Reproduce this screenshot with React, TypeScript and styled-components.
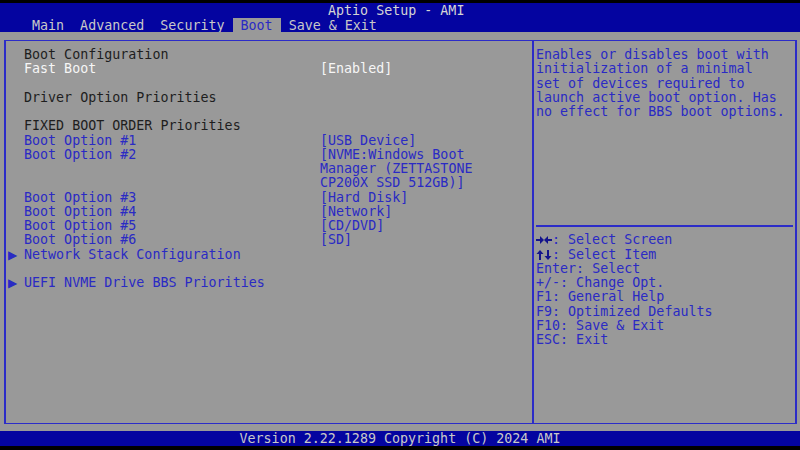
import styled, { createGlobalStyle } from "styled-components";

const ROW = 14.25;

const GlobalStyle = createGlobalStyle`
  html, body {
    margin: 0;
    padding: 0;
    background: #000000;
  }
  * {
    box-sizing: border-box;
  }
`;

const Screen = styled.div`
  width: 800px;
  height: 450px;
  background: #000000;
  display: flex;
  flex-direction: column;
  padding-top: 3px;
  font-family: "DejaVu Sans Mono", "Liberation Mono", monospace;
  font-size: 13.33px;
  overflow: hidden;
`;

const Header = styled.header`
  background: #0404a0;
  height: 29px;
  display: flex;
  flex-direction: column;
`;

const Title = styled.div`
  height: 15px;
  line-height: 16px;
  padding-left: 328px;
  color: #d4d4d4;
  white-space: pre;
`;

const TabBar = styled.nav`
  height: 14px;
  display: flex;
  padding-left: 24px;
`;

const Tab = styled.div<{ $active?: boolean }>`
  height: 14px;
  padding: 1px 8px 0;
  line-height: 14px;
  white-space: pre;
  color: ${(p) => (p.$active ? "#2a2ac4" : "#c8c8c8")};
  background: ${(p) => (p.$active ? "#999999" : "transparent")};
`;

const Body = styled.main`
  background: #999999;
  height: 399px;
  padding: 8px 3px 7px 4px;
`;

const Frame = styled.div`
  height: 100%;
  display: grid;
  grid-template-columns: 528px 1fr;
  border-top: 1px solid #2c2cc8;
  border-bottom: 1px solid #2c2cc8;
  border-left: 2px solid #2c2cc8;
  border-right: 2px solid #2c2cc8;
`;

const LeftPane = styled.section`
  border-right: 2px solid #2c2cc8;
  padding: 7px 0 0 2px;
`;

const RightPane = styled.aside`
  padding: 7px 0 0 2px;
  display: flex;
  flex-direction: column;
`;

const Row = styled.div`
  display: grid;
  grid-template-columns: 16px 296px 20ch;
  line-height: ${ROW}px;
  min-height: ${ROW}px;
`;

type Tone = "dark" | "blue" | "white";

const toneColor: Record<Tone, string> = {
  dark: "#1e1e1e",
  blue: "#2a2ac4",
  white: "#f6f6f6",
};

const Arrow = styled.span`
  color: #2a2ac4;
  font-family: "DejaVu Sans", sans-serif;
  font-size: 12px;
`;

const Label = styled.span<{ $tone: Tone }>`
  color: ${(p) => toneColor[p.$tone]};
  white-space: pre;
`;

const Value = styled.span<{ $tone: Tone }>`
  color: ${(p) => toneColor[p.$tone]};
  white-space: normal;
`;

const HelpText = styled.div`
  height: ${ROW * 12}px;
  line-height: ${ROW}px;
  color: #2a2ac4;
`;

const HelpLine = styled.div`
  white-space: pre;
`;

const Divider = styled.div`
  height: ${ROW}px;
  display: flex;
  align-items: center;
  padding-right: 2px;

  &::before {
    content: "";
    flex: 1;
    height: 2px;
    background: #2c2cc8;
  }
`;

const KeyList = styled.ul`
  list-style: none;
  margin: 0;
  padding: 0;
`;

const KeyItem = styled.li`
  line-height: ${ROW}px;
  color: #2a2ac4;
  white-space: pre;
`;

const KeyIcon = styled.svg`
  width: 16px;
  height: 10px;
  vertical-align: -1px;
`;

function LeftRightIcon() {
  return (
    <KeyIcon viewBox="0 0 16 10" fill="#14148c">
      <path d="M0 4h4V1l4 4-4 4V6H0z" />
      <path d="M16 4h-4V1L8 5l4 4V6h4z" />
    </KeyIcon>
  );
}

function UpDownIcon() {
  return (
    <KeyIcon viewBox="0 0 16 10" fill="#14148c">
      <path d="M4 0l3.5 4H5v6H3V4H0.5z" />
      <path d="M12 10l3.5-4H13V0h-2v6H8.5z" />
    </KeyIcon>
  );
}

const Footer = styled.footer`
  background: #0404a0;
  height: 15px;
  line-height: 15px;
  text-align: center;
  color: #c8c8c8;
  white-space: pre;
`;

interface Item {
  label?: string;
  value?: string;
  tone?: Tone;
  submenu?: boolean;
}

const items: Item[] = [
  { label: "Boot Configuration", tone: "dark" },
  { label: "Fast Boot", value: "[Enabled]", tone: "white" },
  {},
  { label: "Driver Option Priorities", tone: "dark" },
  {},
  { label: "FIXED BOOT ORDER Priorities", tone: "dark" },
  { label: "Boot Option #1", value: "[USB Device]", tone: "blue" },
  {
    label: "Boot Option #2",
    value: "[NVME:Windows Boot Manager (ZETTASTONE CP200X SSD 512GB)]",
    tone: "blue",
  },
  { label: "Boot Option #3", value: "[Hard Disk]", tone: "blue" },
  { label: "Boot Option #4", value: "[Network]", tone: "blue" },
  { label: "Boot Option #5", value: "[CD/DVD]", tone: "blue" },
  { label: "Boot Option #6", value: "[SD]", tone: "blue" },
  { label: "Network Stack Configuration", tone: "blue", submenu: true },
  {},
  { label: "UEFI NVME Drive BBS Priorities", tone: "blue", submenu: true },
];

const help = [
  "Enables or disables boot with",
  "initialization of a minimal",
  "set of devices required to",
  "launch active boot option. Has",
  "no effect for BBS boot options.",
];

const keys: { icon?: "lr" | "ud"; text: string }[] = [
  { icon: "lr", text: ": Select Screen" },
  { icon: "ud", text: ": Select Item" },
  { text: "Enter: Select" },
  { text: "+/-: Change Opt." },
  { text: "F1: General Help" },
  { text: "F9: Optimized Defaults" },
  { text: "F10: Save & Exit" },
  { text: "ESC: Exit" },
];

const tabs = ["Main", "Advanced", "Security", "Boot", "Save & Exit"];

export default function App() {
  return (
    <>
      <GlobalStyle />
      <Screen>
        <Header>
          <Title>Aptio Setup - AMI</Title>
          <TabBar>
            {tabs.map((t) => (
              <Tab key={t} $active={t === "Boot"}>
                {t}
              </Tab>
            ))}
          </TabBar>
        </Header>
        <Body>
          <Frame>
            <LeftPane>
              {items.map((it, i) => (
                <Row key={i}>
                  <Arrow>{it.submenu ? "▶" : ""}</Arrow>
                  <Label $tone={it.tone ?? "dark"}>{it.label ?? ""}</Label>
                  {it.value && <Value $tone={it.tone ?? "dark"}>{it.value}</Value>}
                </Row>
              ))}
            </LeftPane>
            <RightPane>
              <HelpText>
                {help.map((l) => (
                  <HelpLine key={l}>{l}</HelpLine>
                ))}
              </HelpText>
              <Divider />
              <KeyList>
                {keys.map((k) => (
                  <KeyItem key={k.text}>
                    {k.icon === "lr" && <LeftRightIcon />}
                    {k.icon === "ud" && <UpDownIcon />}
                    {k.text}
                  </KeyItem>
                ))}
              </KeyList>
            </RightPane>
          </Frame>
        </Body>
        <Footer>Version 2.22.1289 Copyright (C) 2024 AMI</Footer>
      </Screen>
    </>
  );
}
